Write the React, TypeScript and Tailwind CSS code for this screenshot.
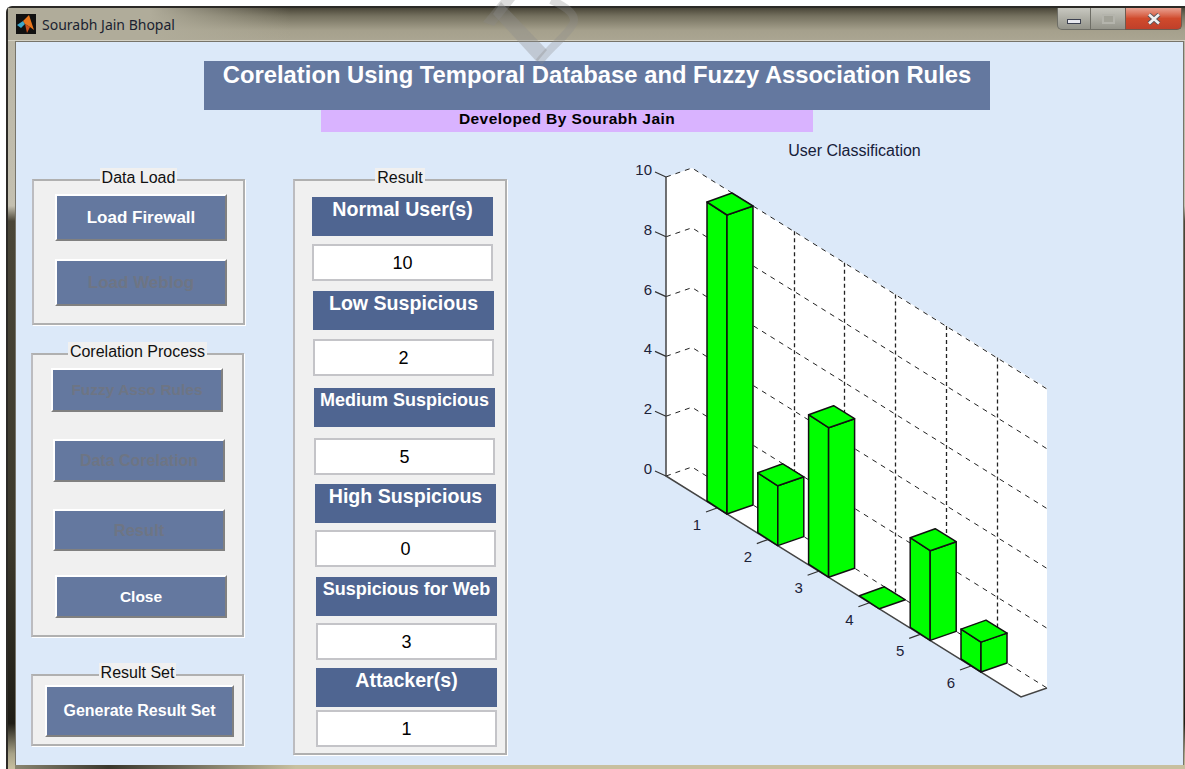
import type { ReactNode } from 'react'

// bar heights of the classification chart, in axis units
const barValues = [10, 2, 5, 0, 3, 1]
const unit = 29.9

const zTicks = [0, 2, 4, 6, 8, 10]

function GroupBox({
  label,
  className,
  children,
}: {
  label: string
  className: string
  children: ReactNode
}) {
  return (
    <div
      className={`relative bg-[#f0f0f0] border-2 border-t-[#b0b0b0] border-l-[#bcbcc0] border-b-[#b0b0b0] border-r-[#b0b0b0] shadow-[1px_1px_0_#fff] ${className}`}
    >
      <span className="absolute -top-[13px] left-0 right-0 flex justify-center">
        <span className="bg-[#f0f0f0] px-[2px] text-[16px] leading-[20px] text-[#111]">
          {label}
        </span>
      </span>
      {children}
    </div>
  )
}

function PushButton({
  label,
  disabled,
  className,
}: {
  label: string
  disabled?: boolean
  className: string
}) {
  return (
    <button
      type="button"
      className={`flex items-center justify-center bg-[#64789f] border-2 border-t-white border-l-white border-b-[#808080] border-r-[#808080] font-bold ${
        disabled ? 'text-[#6e7584]' : 'text-white'
      } ${className}`}
    >
      {label}
    </button>
  )
}

function ResultRow({
  label,
  value,
  className,
  gap,
  labelClass,
}: {
  label: string
  value: number
  className: string
  gap: string
  labelClass: string
}) {
  return (
    <div className={`w-[181px] ${className}`}>
      <div
        className={`h-[39px] bg-[#4f6591] text-white font-bold text-center whitespace-nowrap ${labelClass}`}
      >
        {label}
      </div>
      <div
        className={`h-[37px] pt-[2px] bg-white border-2 border-[#c4c4c8] flex items-center justify-center text-[18px] text-black ${gap}`}
      >
        {value}
      </div>
    </div>
  )
}

function Bar({ index, value }: { index: number; value: number }) {
  const fx = 727 + 50.8 * index
  const fy = 514 + 31.6 * index
  const h = value * unit
  const top = fy - h
  const left = `${fx - 20},${top - 13}`
  const right = `${fx + 26},${top - 9}`
  const back = `${fx + 5},${top - 22}`
  const front = `${fx},${top}`
  return (
    <g stroke="#111" strokeWidth="1.5" strokeLinejoin="round" fill="#00ff00">
      {value > 0 && (
        <>
          <polygon
            points={`${left} ${front} ${fx},${fy} ${fx - 20},${fy - 13}`}
          />
          <polygon
            points={`${front} ${right} ${fx + 26},${fy - 9} ${fx},${fy}`}
          />
        </>
      )}
      <polygon points={`${left} ${back} ${right} ${front}`} />
    </g>
  )
}

function ClassificationChart() {
  return (
    <svg
      viewBox="620 140 440 570"
      className="w-[440px] h-[570px] ml-[113px] -mt-[39px] shrink-0"
    >
      <text x="854.5" y="156" fontSize="16" textAnchor="middle" fill="#16203a">
        User Classification
      </text>

      {/* walls */}
      <polygon
        points="666,177 692,168 1047,388 1047,688 1021,697 666,476"
        fill="#fff"
      />

      {/* grid */}
      <g stroke="#222" strokeWidth="1" fill="none" strokeDasharray="5 5">
        {zTicks.map((z) => {
          const y = 476 - z * unit
          return (
            <polyline
              key={z}
              points={`666,${y} 692,${y - 9} 1047,${y + 212}`}
            />
          )
        })}
        {[2, 3, 4, 5, 6].map((i) => (
          <line
            key={i}
            x1={Math.round(692 + 50.8 * i) + 0.5}
            y1={168 + 31.6 * i}
            x2={Math.round(692 + 50.8 * i) + 0.5}
            y2={467 + 31.6 * i}
            strokeWidth="1.3"
            strokeDasharray="4 3"
          />
        ))}
      </g>

      {/* axes */}
      <polyline
        points="666,177 666,476 1021,697 1047,688"
        fill="none"
        stroke="#444"
        strokeWidth="1.5"
      />
      <g stroke="#333" strokeWidth="1.2">
        {zTicks.map((z) => {
          const y = 476 - z * unit
          return <line key={z} x1="666" y1={y} x2="655" y2={y - 5} />
        })}
        {barValues.map((_, i) => (
          <line
            key={i}
            x1={717 + 50.8 * i}
            y1={508 + 31.6 * i}
            x2={706 + 50.8 * i}
            y2={512 + 31.6 * i}
          />
        ))}
      </g>

      {barValues.map((v, i) => (
        <Bar key={i} index={i} value={v} />
      ))}

      <g fontSize="15" fill="#1c2238">
        {zTicks.map((z) => (
          <text key={z} x="652" y={474 - z * unit} textAnchor="end">
            {z}
          </text>
        ))}
        {barValues.map((_, i) => (
          <text key={i} x={697 + 50.8 * i} y={530 + 31.5 * i} textAnchor="middle">
            {i + 1}
          </text>
        ))}
      </g>
    </svg>
  )
}

function MatlabIcon() {
  return (
    <svg viewBox="0 0 20 20" className="w-[20px] h-[20px] bg-[#111]">
      <path d="M1 11 L7 7 L9 10 L5 14 Z" fill="#3fa7c9" />
      <path d="M7 7 L13 1 L18 16 L14 13 L9 10 Z" fill="#e8761c" />
      <path d="M9 10 L14 13 L11 19 Z" fill="#c9501a" />
    </svg>
  )
}

function WindowButtons() {
  return (
    <div className="ml-auto mr-[3px] flex h-[22px] self-start">
      <div className="w-[34px] flex items-center justify-center rounded-bl-[5px] border border-t-0 border-[#6e6e66] bg-gradient-to-b from-[#c8c8c0] to-[#94948a]">
        <span className="block w-[14px] h-[5px] mt-[6px] bg-[#e8e8ee] border border-[#3c4150]" />
      </div>
      <div className="w-[34px] flex items-center justify-center border-b border-[#6e6e66] bg-gradient-to-b from-[#c8c8c0] to-[#94948a]">
        <span className="block w-[13px] h-[10px] border-2 border-[#b4b4ac] bg-[#a2a298]" />
      </div>
      <div className="w-[57px] flex items-center justify-center rounded-br-[5px] border border-t-0 border-[#6e5a50] bg-gradient-to-b from-[#e8a090] via-[#d04a2c] to-[#c0402a]">
        <svg viewBox="0 0 14 12" className="w-[14px] h-[12px]">
          <path
            d="M2 1.5 L12 10.5 M12 1.5 L2 10.5"
            stroke="#55555c"
            strokeWidth="4.4"
          />
          <path
            d="M2 1.5 L12 10.5 M12 1.5 L2 10.5"
            stroke="#f0f0f0"
            strokeWidth="2.6"
          />
        </svg>
      </div>
    </div>
  )
}

// faint stamp lying across the top edge of the window
function Stamp() {
  return (
    <svg
      viewBox="0 0 130 64"
      className="absolute left-[477px] top-0 w-[130px] h-[64px] pointer-events-none"
    >
      <path d="M6 22 L24 0 L38 0 L17 26 Z" fill="#8c8c8c" fillOpacity="0.3" />
      <path d="M24 2 L70 50 L60 62 L16 14 Z" fill="#8c8c8c" fillOpacity="0.35" />
      <path
        d="M74 0 C92 8 100 16 96 24 C90 36 76 44 62 62"
        fill="none"
        stroke="#8c8c8c"
        strokeOpacity="0.3"
        strokeWidth="8"
      />
    </svg>
  )
}

export default function App() {
  return (
    <div className="relative w-[1185px] h-[769px] overflow-hidden bg-white pt-[6px] pl-[6px] font-['Liberation_Sans',Arial,sans-serif]">
      <div className="h-[763px] flex flex-col rounded-tl-[6px] border-t-2 border-l-2 border-[#2c2a26] bg-[linear-gradient(180deg,#b8b4a4_0%,#c4c0b0_26%,#4a4638_28%,#3c392c_70%,#1f1d16_94%,#a8a388_98%,#c8c0a0_100%)]">
        {/* title bar */}
        <div className="h-[33px] shrink-0 flex items-center pl-[8px] border-b border-[#d4d1c4] bg-[linear-gradient(90deg,#b0ac9a_0%,#b0ac9a_12%,rgba(176,172,154,0)_24%),linear-gradient(180deg,#4a4638_0%,#75715f_25%,#a5a08c_70%,#aaa592_100%)]">
          <MatlabIcon />
          <span className="ml-[6px] text-[14px] text-[#1a1f30] font-['Noto_Sans',sans-serif]">
            Sourabh Jain Bhopal
          </span>
          <WindowButtons />
        </div>

        {/* figure area */}
        <div className="flex-1 ml-[7px] mr-[1px] border-t border-l border-r border-[#77746a] bg-[#dce9f9]">
          <div className="ml-[188px] mt-[19px] w-[786px] h-[49px] bg-[#64789f] text-center text-white font-bold text-[23.8px] leading-[28px]">
            Corelation Using Temporal Database and Fuzzy Association Rules
          </div>
          <div className="ml-[305px] w-[492px] h-[22px] bg-[#d9b3ff] text-center text-black font-bold text-[15.5px] leading-[18px] tracking-[0.45px]">
            Developed By Sourabh Jain
          </div>

          <div className="flex mt-[47px] ml-[15px]">
            {/* left column */}
            <div className="w-[214px] shrink-0">
              <GroupBox label="Data Load" className="ml-[1px] w-[213px] h-[146px] pt-[13px]">
                <PushButton label="Load Firewall" className="ml-[21px] w-[172px] h-[47px] text-[17px]" />
                <PushButton
                  label="Load Weblog"
                  disabled
                  className="ml-[21px] mt-[18px] w-[172px] h-[47px] text-[17px]"
                />
              </GroupBox>
              <GroupBox label="Corelation Process" className="mt-[28px] w-[213px] h-[284px] pt-[13px]">
                <PushButton
                  label="Fuzzy Asso Rules"
                  disabled
                  className="ml-[18px] w-[172px] h-[44px] text-[15.5px]"
                />
                <PushButton
                  label="Data Corelation"
                  disabled
                  className="ml-[20px] mt-[27px] w-[172px] h-[43px] text-[16px]"
                />
                <PushButton
                  label="Result"
                  disabled
                  className="ml-[20px] mt-[27px] w-[172px] h-[42px] text-[16.5px]"
                />
                <PushButton label="Close" className="ml-[22px] mt-[24px] w-[172px] h-[43px] text-[15.5px]" />
              </GroupBox>
              <GroupBox label="Result Set" className="mt-[37px] w-[213px] h-[72px] pt-[9px]">
                <PushButton
                  label="Generate Result Set"
                  className="ml-[12px] w-[189px] h-[52px] text-[16px]"
                />
              </GroupBox>
            </div>

            {/* result column */}
            <GroupBox label="Result" className="ml-[48px] w-[214px] h-[576px] shrink-0 pt-[16px]">
              <ResultRow
                label="Normal User(s)"
                value={10}
                className="ml-[17px]"
                gap="mt-[8px]"
                labelClass="text-[19.6px] leading-[24px]"
              />
              <ResultRow
                label="Low Suspicious"
                value={2}
                className="ml-[18px] mt-[10px]"
                gap="mt-[9px]"
                labelClass="text-[19.6px] leading-[24px]"
              />
              <ResultRow
                label="Medium Suspicious"
                value={5}
                className="ml-[19px] mt-[12px]"
                gap="mt-[11px]"
                labelClass="text-[18px] leading-[24px]"
              />
              <ResultRow
                label="High Suspicious"
                value={0}
                className="ml-[20px] mt-[9px]"
                gap="mt-[7px]"
                labelClass="text-[19.6px] leading-[24px]"
              />
              <ResultRow
                label="Suspicious for Web"
                value={3}
                className="ml-[21px] mt-[10px]"
                gap="mt-[7px]"
                labelClass="text-[18px] leading-[24px]"
              />
              <ResultRow
                label="Attacker(s)"
                value={1}
                className="ml-[21px] mt-[8px]"
                gap="mt-[3px]"
                labelClass="text-[19.6px] leading-[24px]"
              />
            </GroupBox>

            <ClassificationChart />
          </div>
        </div>

        {/* bottom edge of the window frame */}
        <div className="h-[4px] shrink-0 ml-[7px] bg-[linear-gradient(90deg,#8a8672_0%,#3a372c_8%,#6a6656_14%,#c8c0a0_24%,#c8c0a0_100%)]" />
      </div>
      <Stamp />
    </div>
  )
}
